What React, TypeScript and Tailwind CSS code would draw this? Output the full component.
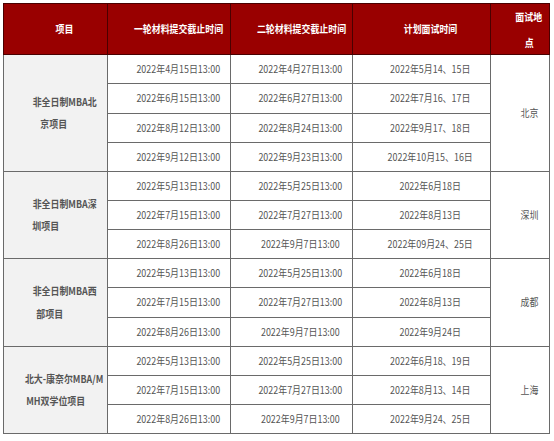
import React from "react";

type Row = [string, string, string];
type Group = { name: [string, string]; shift: string; city: string; rows: Row[] };

const groups: Group[] = [
  {
    name: ["非全日制MBA北", "京项目"],
    shift: "mr-[22px]",
    city: "北京",
    rows: [
      ["2022年4月15日13:00", "2022年4月27日13:00", "2022年5月14、15日"],
      ["2022年6月15日13:00", "2022年6月27日13:00", "2022年7月16、17日"],
      ["2022年8月12日13:00", "2022年8月24日13:00", "2022年9月17、18日"],
      ["2022年9月12日13:00", "2022年9月23日13:00", "2022年10月15、16日"],
    ],
  },
  {
    name: ["非全日制MBA深", "圳项目"],
    shift: "mr-[38px]",
    city: "深圳",
    rows: [
      ["2022年5月13日13:00", "2022年5月25日13:00", "2022年6月18日"],
      ["2022年7月15日13:00", "2022年7月27日13:00", "2022年8月13日"],
      ["2022年8月26日13:00", "2022年9月7日13:00", "2022年09月24、25日"],
    ],
  },
  {
    name: ["非全日制MBA西", "部项目"],
    shift: "mr-[29px]",
    city: "成都",
    rows: [
      ["2022年5月13日13:00", "2022年5月25日13:00", "2022年6月18日"],
      ["2022年7月15日13:00", "2022年7月27日13:00", "2022年8月13日"],
      ["2022年8月26日13:00", "2022年9月7日13:00", "2022年9月24日"],
    ],
  },
  {
    name: ["北大-康奈尔MBA/M", "MH双学位项目"],
    shift: "mr-[17px]",
    city: "上海",
    rows: [
      ["2022年5月13日13:00", "2022年5月25日13:00", "2022年6月18、19日"],
      ["2022年7月15日13:00", "2022年7月27日13:00", "2022年8月13、14日"],
      ["2022年8月26日13:00", "2022年9月7日13:00", "2022年9月24、25日"],
    ],
  },
];

const S = ({ children, className = "" }: { children: React.ReactNode; className?: string }) => (
  <span className={`inline-block scale-x-[0.85] whitespace-nowrap ${className}`}>{children}</span>
);

const th = "border border-[#4a0000] bg-[#990000] text-white font-bold text-center align-middle pl-[18px] p-0";
const td = "border border-[#6a6a6a] text-center align-middle pl-[18px] p-0 text-[#555555]";

export default function App() {
  let rowIndex = 0;
  return (
    <div
      className="w-[554px] h-[441px] bg-white p-[3px]"
      style={{ fontFamily: '"Noto Sans CJK SC", "Noto Sans", sans-serif' }}
    >
      <table className="table-fixed border-collapse w-[546px] text-[10.5px] leading-none border border-[#777777]">
        <colgroup>
          <col className="w-[104px]" />
          <col className="w-[123px]" />
          <col className="w-[122px]" />
          <col className="w-[138px]" />
          <col className="w-[59px]" />
        </colgroup>
        <thead>
          <tr className="h-[51px]">
            <th className={th}>
              <S>项目</S>
            </th>
            <th className={th}>
              <S>一轮材料提交截止时间</S>
            </th>
            <th className={th}>
              <S>二轮材料提交截止时间</S>
            </th>
            <th className={th}>
              <S>计划面试时间</S>
            </th>
            <th className={th}>
              <div className="flex flex-col items-center gap-[15px] pt-[2px]">
                <S>面试地</S>
                <S>点</S>
              </div>
            </th>
          </tr>
        </thead>
        <tbody>
          {groups.map((g) =>
            g.rows.map((r, i) => {
              rowIndex++;
              const h = rowIndex === 2 || rowIndex === 9 ? "h-[30px]" : "h-[29px]";
              return (
                <tr key={`${g.city}-${i}`} className={h}>
                  {i === 0 && (
                    <td rowSpan={g.rows.length} className={`${td} bg-[#f2f2f2] text-[#333333] font-bold`}>
                      <div className="flex flex-col items-center gap-[12px]">
                        <S>{g.name[0]}</S>
                        <S className={g.shift}>{g.name[1]}</S>
                      </div>
                    </td>
                  )}
                  <td className={td}>
                    <S>{r[0]}</S>
                  </td>
                  <td className={td}>
                    <S>{r[1]}</S>
                  </td>
                  <td className={td}>
                    <S>{r[2]}</S>
                  </td>
                  {i === 0 && (
                    <td rowSpan={g.rows.length} className={td}>
                      <S>{g.city}</S>
                    </td>
                  )}
                </tr>
              );
            })
          )}
        </tbody>
      </table>
    </div>
  );
}
